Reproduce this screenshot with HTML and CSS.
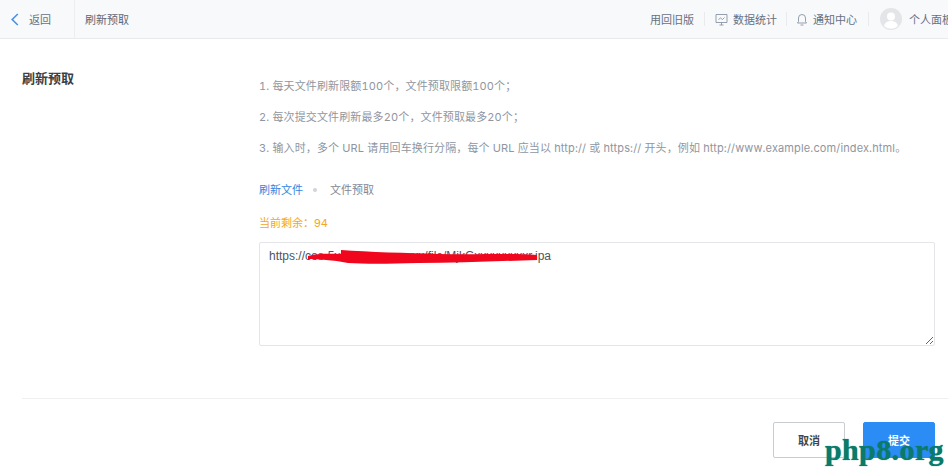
FILE: index.html
```html
<!DOCTYPE html>
<html lang="zh-CN">
  <head>
    <meta charset="UTF-8" />
    <title>刷新预取</title>
    <link rel="stylesheet" href="styles.css">
  </head>
  <body>
    <header class="topbar">
      <a class="back">
        <svg class="back-icon" width="8" height="13" viewBox="0 0 8 13"><path d="M6.800 1 1.200 6.500l5.600 5.500" fill="none" stroke="#4a90e2" stroke-width="1.600"/></svg>
        <span>返回</span>
      </a>
      <div class="crumb">刷新预取</div>
      <nav class="topnav">
        <span class="nav-item nav-old">用回旧版</span>
        <span class="nav-item nav-stats">
          <svg width="13" height="13" viewBox="0 0 13 13" fill="none" stroke="#8a94a3" stroke-width="0.900"><path d="M1 1.500h11v8H1zM4.500 12h4M6.500 9.500V12"/><path d="M3.500 6.500 5.500 5l2 1.500 2-2"/></svg>
          数据统计
        </span>
        <span class="nav-item nav-bell">
          <svg width="10" height="13" viewBox="0 0 10 13" fill="none" stroke="#8a94a3" stroke-width="0.900"><path d="M.5 10h9L8.500 8.500V5a3.500 3.500 0 0 0-7 0v3.500zM3.500 12h3"/></svg>
          通知中心
        </span>
        <span class="nav-item nav-user">
          <svg class="avatar" width="22" height="22" viewBox="0 0 22 22"><circle cx="11" cy="11" r="11" fill="#e3e5e8"/><circle cx="11" cy="8.500" r="4" fill="#fff"/><path d="M4 18c1-4 4-5 7-5s6 1 7 5a10 10 0 0 1-14 0z" fill="#fff"/></svg>
          <span class="user-name">个人面板</span>
        </span>
      </nav>
    </header>

    <main class="page">
      <h2 class="page-title">刷新预取</h2>
      <section class="panel">
        <ol class="notes">
          <li>1. 每天文件刷新限额100个，文件预取限额100个；</li>
          <li>2. 每次提交文件刷新最多20个，文件预取最多20个；</li>
          <li>3. 输入时，多个 URL 请用回车换行分隔，每个 URL 应当以 http:// 或 https:// 开头，例如 http://www.example.com/index.html。</li>
        </ol>
        <div class="tabs">
          <span class="tab tab-active">刷新文件</span>
          <i class="tab-dot"></i>
          <span class="tab">文件预取</span>
        </div>
        <p class="remain">当前剩余：94</p>
        <div class="url-box">
          <textarea class="url-input" spellcheck="false">https://cos-5xxxxxxxxxxxxxxx/file/MjkGxxxxxxxxxr.ipa</textarea>
          <svg class="scribble" width="230" height="15" viewBox="0 0 230 15"><path d="M0 6C10 3 25 4 33 4L33 0C60 2 100 3 130 4C170 5 205 3 229 5L229 10C190 11 150 13 110 13C80 14 55 14 40 13C25 10 10 9 0 9z" fill="#f0061d"/></svg>
        </div>
      </section>
    </main>

    <footer class="actions">
      <button class="btn">取消</button>
      <button class="btn btn-primary">提交</button>
    </footer>

    <div class="watermark">php8.org</div>
  </body>
</html>
```

FILE: styles.css
```css
html,
body {
  margin: 0;
  height: 468px;
  overflow: hidden;
}
body {
  position: relative;
  background: #fff;
  color: #4b5563;
  font-family: Inter, "Noto Sans CJK SC", sans-serif;
  font-size: 11px;
}

.topbar {
  display: flex;
  align-items: center;
  height: 38px;
  background: #f8f9fb;
  border-bottom: 1px solid #e8eaed;
  white-space: nowrap;
}
.back {
  display: flex;
  align-items: center;
  gap: 10px;
  box-sizing: border-box;
  width: 75px;
  height: 38px;
  padding-left: 11px;
  border-right: 1px solid #eceef1;
  color: #66717f;
}
.crumb {
  margin-left: 10px;
  color: #5d6775;
}
.topnav {
  display: flex;
  align-items: center;
  margin-left: auto;
  color: #66717f;
}
.nav-item {
  display: flex;
  align-items: center;
  height: 14px;
  padding: 0 10px;
  border-right: 1px solid #e8eaed;
}
.nav-stats {
  gap: 5px;
  padding-right: 9px;
}
.nav-bell {
  gap: 6px;
  padding-right: 11px;
}
.nav-user {
  gap: 7px;
  padding: 0 0 0 11px;
  border-right: 0;
}
.user-name {
  width: 39px;
  overflow: hidden;
}

.page {
  display: grid;
  grid-template-columns: 237px 676px;
  padding: 29px 0 0 22px;
}
.page-title {
  margin: 0;
  color: #3a3f47;
  font-size: 13px;
  font-weight: bold;
  line-height: 20px;
}
.notes {
  list-style: none;
  margin: 0;
  padding: 10px 0 0;
  color: #8f96a0;
  font-feature-settings: "tnum";
  letter-spacing: 0.13px;
  white-space: nowrap;
}
.notes li {
  height: 31px;
  line-height: 17px;
}
.tabs {
  display: flex;
  align-items: center;
  margin-top: 11px;
  line-height: 16px;
}
.tab {
  color: #7f8894;
}
.tab-active {
  color: #2f86e0;
}
.tab-dot {
  width: 4px;
  height: 4px;
  margin: 0 13px 0 10px;
  border-radius: 50%;
  background: #cfd4da;
}
.remain {
  margin: 17px 0 0;
  color: #f5a623;
  line-height: 16px;
}
.url-box {
  position: relative;
  margin-top: 11px;
  height: 104px;
}
.url-input {
  display: block;
  box-sizing: border-box;
  width: 100%;
  height: 104px;
  padding: 5px 9px;
  border: 1px solid #e3e5e8;
  border-radius: 2px;
  outline: 0;
  color: #4b5563;
  font-family: "Liberation Sans", sans-serif;
  font-size: 12px;
  line-height: 17px;
}
.scribble {
  position: absolute;
  left: 49px;
  top: 8px;
}

.actions {
  display: flex;
  justify-content: flex-end;
  gap: 18px;
  margin: 52px 0 0 22px;
  padding: 23px 13px 0 0;
  border-top: 1px solid #eeeff1;
}
.btn {
  box-sizing: border-box;
  width: 72px;
  height: 36px;
  border: 1px solid #c9ccd1;
  border-radius: 2px;
  background: #fff;
  color: #444;
  font-family: inherit;
  font-size: 11px;
  font-weight: bold;
}
.btn-primary {
  border-color: #2b8cf5;
  background: #2b8cf5;
  color: #fff;
}

.watermark {
  position: absolute;
  right: 4px;
  bottom: 1px;
  color: #0b7a6b;
  font-family: "Liberation Serif", serif;
  font-size: 30px;
  font-weight: bold;
  line-height: 34px;
  letter-spacing: 0.4px;
  text-shadow: 0 0 1px #0b7a6b;
}
```
